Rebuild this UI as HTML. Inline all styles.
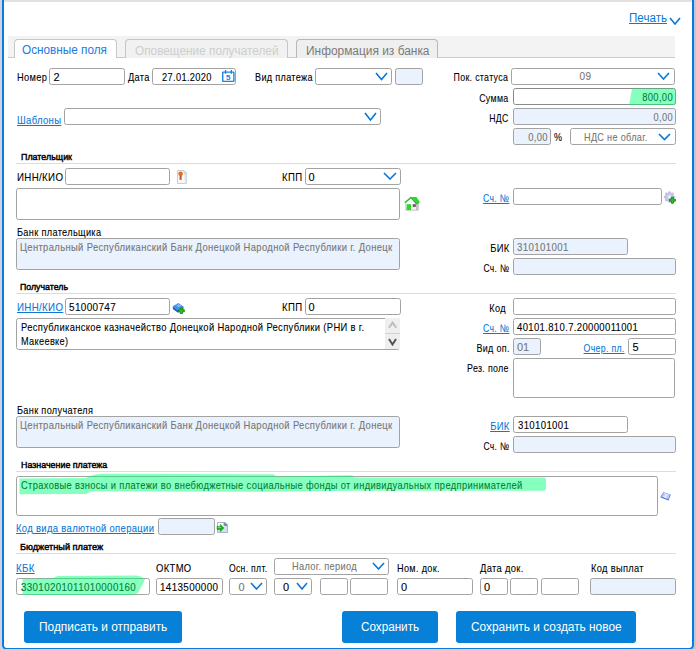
<!DOCTYPE html>
<html><head><meta charset="utf-8"><style>
html,body{margin:0;padding:0;width:696px;height:649px;overflow:hidden;background:#fff;font-family:"Liberation Sans", sans-serif;}
</style></head><body>
<div style="position:absolute;left:0px;top:0px;width:348px;height:649px;background:#cdd3e0;"></div>
<div style="position:absolute;left:348px;top:0px;width:348px;height:649px;background:#bfc7db;"></div>
<div style="position:absolute;left:2px;top:-10px;width:692px;height:660px;box-sizing:border-box;border:2px solid #0a7bda;border-radius:0 0 5px 5px;background:#fff"></div>
<div style="position:absolute;left:4px;top:0px;width:688px;height:2px;background:#e1e1e1;"></div>
<div style="position:absolute;left:629.00px;top:8px;font-size:12.5px;line-height:20px;font-weight:400;color:#0a78d7;white-space:nowrap;text-decoration:underline;text-underline-offset:1px;transform:scaleX(0.9279);transform-origin:0px top;">Печать</div>
<svg style="position:absolute;left:669px;top:17px" width="12" height="8" viewBox="0 0 12 8"><polyline points="1,1 6.0,7 11,1" fill="none" stroke="#0a78d7" stroke-width="1.6"/></svg>
<div style="position:absolute;left:8px;top:36px;width:667px;height:21px;background:#f3f3f3;"></div>
<div style="position:absolute;left:8px;top:57px;width:667px;height:1px;background:#cbcbcb;"></div>
<div style="position:absolute;left:14px;top:39px;width:103px;height:19px;box-sizing:border-box;border:1px solid #c8c8c8;border-bottom:none;border-radius:4px 4px 0 0;background:#fff"></div>
<div style="position:absolute;left:125px;top:39px;width:163px;height:19px;box-sizing:border-box;border:1px solid #c6c6c6;border-bottom:none;border-radius:4px 4px 0 0;background:#f1f1f1"></div>
<div style="position:absolute;left:296px;top:39px;width:142px;height:19px;box-sizing:border-box;border:1px solid #b8b8b8;border-bottom:none;border-radius:4px 4px 0 0;background:#efefef"></div>
<div style="position:absolute;left:22.40px;top:40px;font-size:12.5px;line-height:20px;font-weight:400;color:#2279dc;white-space:nowrap;transform:scaleX(0.9413);transform-origin:0px top;">Основные поля</div>
<div style="position:absolute;left:134.70px;top:41px;font-size:12.5px;line-height:20px;font-weight:400;color:#cecece;white-space:nowrap;transform:scaleX(0.9451);transform-origin:0px top;">Оповещение получателей</div>
<div style="position:absolute;left:305.50px;top:41px;font-size:12.5px;line-height:20px;font-weight:400;color:#7a7a7a;white-space:nowrap;transform:scaleX(0.9527);transform-origin:0px top;">Информация из банка</div>
<div style="position:absolute;left:16.50px;top:67px;font-size:11px;line-height:20px;font-weight:400;color:#000;white-space:nowrap;letter-spacing:0.4px;-webkit-text-stroke:0.1px #000;transform:scaleX(0.8460);transform-origin:0px top;">Номер</div>
<div style="position:absolute;left:49px;top:68px;width:76px;height:17px;box-sizing:border-box;border:1px solid #a3a3a3;background:#fff;border-radius:2.5px;"></div>
<div style="position:absolute;left:53.50px;top:67px;font-size:11px;line-height:20px;font-weight:400;color:#000;white-space:nowrap;-webkit-text-stroke:0.1px #000;">2</div>
<div style="position:absolute;left:128.00px;top:67px;font-size:11px;line-height:20px;font-weight:400;color:#000;white-space:nowrap;letter-spacing:0.4px;-webkit-text-stroke:0.1px #000;transform:scaleX(0.8370);transform-origin:0px top;">Дата</div>
<div style="position:absolute;left:152px;top:68px;width:84px;height:17px;box-sizing:border-box;border:1px solid #a3a3a3;background:#fff;border-radius:2.5px;"></div>
<div style="position:absolute;left:161.50px;top:67px;font-size:11px;line-height:20px;font-weight:400;color:#000;white-space:nowrap;letter-spacing:0.4px;-webkit-text-stroke:0.1px #000;transform:scaleX(0.8438);transform-origin:0px top;">27.01.2020</div>
<svg style="position:absolute;left:222px;top:70px" width="13" height="13" viewBox="0 0 13 13"><rect x="0.7" y="2.1" width="11.2" height="9.3" rx="0.6" fill="#fff" stroke="#1a82e0" stroke-width="1.4"/><rect x="2.9" y="0" width="1.3" height="3.8" fill="#1a82e0"/><rect x="8.7" y="0" width="1.3" height="3.8" fill="#1a82e0"/><text x="6.3" y="10" font-size="8" font-weight="700" text-anchor="middle" fill="#1a82e0" font-family="Liberation Sans">5</text></svg>
<div style="position:absolute;left:254.50px;top:67px;font-size:11px;line-height:20px;font-weight:400;color:#000;white-space:nowrap;letter-spacing:0.4px;-webkit-text-stroke:0.1px #000;transform:scaleX(0.8261);transform-origin:0px top;">Вид платежа</div>
<div style="position:absolute;left:315px;top:68px;width:77px;height:17px;box-sizing:border-box;border:1px solid #a3a3a3;background:#fff;border-radius:2.5px;"></div>
<svg style="position:absolute;left:375px;top:72px" width="13" height="8.5" viewBox="0 0 13 8.5"><polyline points="1,1 6.5,7.5 12,1" fill="none" stroke="#0a78d7" stroke-width="1.6"/></svg>
<div style="position:absolute;left:395px;top:68px;width:28px;height:17px;box-sizing:border-box;border:1px solid #a3a3a3;background:#eaf2fd;border-radius:2.5px;"></div>
<div style="position:absolute;left:440.20px;top:67px;font-size:11px;line-height:20px;font-weight:400;color:#000;white-space:nowrap;letter-spacing:0.4px;-webkit-text-stroke:0.1px #000;transform:scaleX(0.7994);transform-origin:67.80px top;">Пок. статуса</div>
<div style="position:absolute;left:511px;top:68px;width:164px;height:17px;box-sizing:border-box;border:1px solid #a3a3a3;background:#fff;border-radius:2.5px;"></div>
<div style="position:absolute;left:579.28px;top:66px;font-size:11px;line-height:20px;font-weight:400;color:#767676;white-space:nowrap;letter-spacing:0.4px;-webkit-text-stroke:0.1px #767676;transform:scaleX(0.9093);transform-origin:6.32px top;">09</div>
<svg style="position:absolute;left:657px;top:72px" width="13" height="8" viewBox="0 0 13 8"><polyline points="1,1 6.5,7 12,1" fill="none" stroke="#0a78d7" stroke-width="1.6"/></svg>
<div style="position:absolute;left:472.42px;top:88px;font-size:11px;line-height:20px;font-weight:400;color:#000;white-space:nowrap;letter-spacing:0.4px;-webkit-text-stroke:0.1px #000;transform:scaleX(0.8016);transform-origin:36.18px top;">Сумма</div>
<div style="position:absolute;left:513px;top:88px;width:163px;height:17px;box-sizing:border-box;border:1px solid #8a8a8a;background:#fff;border-radius:2.5px;"></div>
<div style="position:absolute;left:636.85px;top:87px;font-size:11px;line-height:20px;font-weight:400;color:#000;white-space:nowrap;letter-spacing:0.4px;-webkit-text-stroke:0.1px #000;transform:scaleX(0.8556);transform-origin:35.65px top;">800,00</div>
<div style="position:absolute;left:484.45px;top:108px;font-size:11px;line-height:20px;font-weight:400;color:#000;white-space:nowrap;letter-spacing:0.4px;-webkit-text-stroke:0.1px #000;transform:scaleX(0.7869);transform-origin:24.15px top;">НДС</div>
<div style="position:absolute;left:513px;top:108px;width:163px;height:17px;box-sizing:border-box;border:1px solid #a3a3a3;background:#eaf2fd;border-radius:2.5px;"></div>
<div style="position:absolute;left:649.88px;top:107px;font-size:11px;line-height:20px;font-weight:400;color:#767676;white-space:nowrap;letter-spacing:0.4px;-webkit-text-stroke:0.1px #767676;transform:scaleX(0.8401);transform-origin:22.62px top;">0,00</div>
<div style="position:absolute;left:513px;top:128px;width:38px;height:17px;box-sizing:border-box;border:1px solid #a3a3a3;background:#eaf2fd;border-radius:2.5px;"></div>
<div style="position:absolute;left:524.88px;top:127px;font-size:11px;line-height:20px;font-weight:400;color:#767676;white-space:nowrap;letter-spacing:0.4px;-webkit-text-stroke:0.1px #767676;transform:scaleX(0.8578);transform-origin:22.62px top;">0,00</div>
<div style="position:absolute;left:553.50px;top:127px;font-size:11px;line-height:20px;font-weight:400;color:#000;white-space:nowrap;letter-spacing:0.4px;-webkit-text-stroke:0.1px #000;transform:scaleX(0.8174);transform-origin:0px top;">%</div>
<div style="position:absolute;left:570px;top:128px;width:106px;height:17px;box-sizing:border-box;border:1px solid #a3a3a3;background:#fff;border-radius:2.5px;"></div>
<div style="position:absolute;left:583.70px;top:127px;font-size:11px;line-height:20px;font-weight:400;color:#767676;white-space:nowrap;letter-spacing:0.4px;-webkit-text-stroke:0.1px #767676;transform:scaleX(0.8247);transform-origin:0px top;">НДС не облаг.</div>
<svg style="position:absolute;left:658px;top:133px" width="13" height="7.5" viewBox="0 0 13 7.5"><polyline points="1,1 6.5,6.5 12,1" fill="none" stroke="#0a78d7" stroke-width="1.6"/></svg>
<div style="position:absolute;left:17.00px;top:110px;font-size:11px;line-height:20px;font-weight:400;color:#0a78d7;white-space:nowrap;letter-spacing:0.4px;-webkit-text-stroke:0.1px #0a78d7;text-decoration:underline;text-underline-offset:1px;transform:scaleX(0.8618);transform-origin:0px top;">Шаблоны</div>
<div style="position:absolute;left:64px;top:108px;width:317px;height:17px;box-sizing:border-box;border:1px solid #a3a3a3;background:#fff;border-radius:2.5px;"></div>
<svg style="position:absolute;left:364px;top:112px" width="13" height="9" viewBox="0 0 13 9"><polyline points="1,1 6.5,8 12,1" fill="none" stroke="#0a78d7" stroke-width="1.6"/></svg>
<div style="position:absolute;left:20.50px;top:147px;font-size:9.5px;line-height:20px;font-weight:400;color:#000;white-space:nowrap;transform:scaleX(0.9369);transform-origin:0px top;-webkit-text-stroke:0.45px #000;">Плательщик</div>
<div style="position:absolute;left:16px;top:163px;width:660px;height:1px;background:#dcdcdc;"></div>
<div style="position:absolute;left:16.50px;top:167px;font-size:11px;line-height:20px;font-weight:400;color:#000;white-space:nowrap;letter-spacing:0.4px;-webkit-text-stroke:0.1px #000;transform:scaleX(0.8824);transform-origin:0px top;">ИНН/КИО</div>
<div style="position:absolute;left:65px;top:168px;width:105px;height:17px;box-sizing:border-box;border:1px solid #a3a3a3;background:#fff;border-radius:2.5px;"></div>
<svg style="position:absolute;left:176px;top:170px" width="12" height="14" viewBox="0 0 12 14"><path d="M1.5 0.5h6.5l2.5 2.5v10.5h-9z" fill="#f6fafc" stroke="#c4d0d4"/><path d="M8 3h2.5v10.5h-1.5z" fill="#dde6ea"/><path d="M8 0.5v2.5h2.5" fill="none" stroke="#b8c4c8" stroke-width="0.8"/><path d="M3.6 5h2v5.2l-1-0.7-1 0.7z" fill="#d04a08"/><circle cx="4.6" cy="3.8" r="2.3" fill="#ea6a1c"/></svg>
<div style="position:absolute;left:279.28px;top:167px;font-size:11px;line-height:20px;font-weight:400;color:#000;white-space:nowrap;letter-spacing:0.4px;-webkit-text-stroke:0.1px #000;transform:scaleX(0.8687);transform-origin:23.02px top;">КПП</div>
<div style="position:absolute;left:305px;top:168px;width:96px;height:17px;box-sizing:border-box;border:1px solid #a3a3a3;background:#fff;border-radius:2.5px;"></div>
<div style="position:absolute;left:308.50px;top:167px;font-size:11px;line-height:20px;font-weight:400;color:#000;white-space:nowrap;-webkit-text-stroke:0.1px #000;">0</div>
<svg style="position:absolute;left:383px;top:172px" width="14" height="8" viewBox="0 0 14 8"><polyline points="1,1 7.0,7 13,1" fill="none" stroke="#0a78d7" stroke-width="1.6"/></svg>
<div style="position:absolute;left:16px;top:188px;width:384px;height:32px;box-sizing:border-box;border:1px solid #a3a3a3;background:#fff;border-radius:2.5px;"></div>
<svg style="position:absolute;left:404px;top:196px" width="17" height="15" viewBox="0 0 17 15"><path d="M1.3 7.2L7.2 6.4L13.8 7L14.8 13.8L2 14.3z" fill="#faf6fa"/><path d="M11.5 7.5L14.8 6.5L14.8 13.6L12 14.3z" fill="#c8c0c8"/><path d="M1.6 14.2h13" stroke="#b8b0b8" stroke-width="0.8"/><path d="M1.6 7.2v7" stroke="#d0c8d0" stroke-width="0.8"/><path d="M0.8 6.8L7.3 1.2" stroke="#22bb22" stroke-width="1.4"/><path d="M7.2 1L12.4 1L16 6.2L13.8 7.9z" fill="#22dd22"/><path d="M7.2 1L13.8 7.9L12.2 8.2L6.6 2z" fill="#1aaa1a"/><rect x="2.6" y="8.2" width="4.4" height="5.8" fill="#22dd22"/><rect x="8.8" y="8.2" width="3" height="2.7" fill="#5a5a5a"/></svg>
<div style="position:absolute;left:475.93px;top:188px;font-size:11px;line-height:20px;font-weight:400;color:#0a78d7;white-space:nowrap;letter-spacing:0.4px;-webkit-text-stroke:0.1px #0a78d7;text-decoration:underline;text-underline-offset:1px;transform:scaleX(0.7862);transform-origin:33.07px top;">Сч. №</div>
<div style="position:absolute;left:513px;top:188px;width:149px;height:17px;box-sizing:border-box;border:1px solid #a3a3a3;background:#fff;border-radius:2.5px;"></div>
<svg style="position:absolute;left:663px;top:191px" width="13" height="13" viewBox="0 0 13 13"><rect x="5.4" y="0.3" width="2.2" height="2.6" fill="#c4c4e6" transform="rotate(0 6.5 6)"/><rect x="5.4" y="0.3" width="2.2" height="2.6" fill="#c4c4e6" transform="rotate(45 6.5 6)"/><rect x="5.4" y="0.3" width="2.2" height="2.6" fill="#c4c4e6" transform="rotate(90 6.5 6)"/><rect x="5.4" y="0.3" width="2.2" height="2.6" fill="#c4c4e6" transform="rotate(135 6.5 6)"/><rect x="5.4" y="0.3" width="2.2" height="2.6" fill="#c4c4e6" transform="rotate(180 6.5 6)"/><rect x="5.4" y="0.3" width="2.2" height="2.6" fill="#c4c4e6" transform="rotate(225 6.5 6)"/><rect x="5.4" y="0.3" width="2.2" height="2.6" fill="#c4c4e6" transform="rotate(270 6.5 6)"/><rect x="5.4" y="0.3" width="2.2" height="2.6" fill="#c4c4e6" transform="rotate(315 6.5 6)"/><circle cx="6.5" cy="6" r="4.3" fill="#c8c8ea" stroke="#b0b0dc" stroke-width="0.6"/><circle cx="6.5" cy="6" r="1.4" fill="#f4f4ff"/><path d="M8.4 6.2h2v2h2v2h-2v2h-2v-2h-2v-2h2z" fill="#30c030" stroke="#0d860d" stroke-width="0.9"/></svg>
<div style="position:absolute;left:16.70px;top:222px;font-size:11px;line-height:20px;font-weight:400;color:#000;white-space:nowrap;letter-spacing:0.4px;-webkit-text-stroke:0.1px #000;transform:scaleX(0.8340);transform-origin:0px top;">Банк плательщика</div>
<div style="position:absolute;left:16px;top:238px;width:384px;height:32px;box-sizing:border-box;border:1px solid #a3a3a3;background:#eaf2fd;border-radius:2.5px;"></div>
<div style="position:absolute;left:19.70px;top:237px;font-size:11px;line-height:20px;font-weight:400;color:#767676;white-space:nowrap;letter-spacing:0.4px;-webkit-text-stroke:0.1px #767676;transform:scaleX(0.8575);transform-origin:0px top;">Центральный Республиканский Банк Донецкой Народной Республики г. Донецк</div>
<div style="position:absolute;left:487.07px;top:238px;font-size:11px;line-height:20px;font-weight:400;color:#000;white-space:nowrap;letter-spacing:0.4px;-webkit-text-stroke:0.1px #000;transform:scaleX(0.8552);transform-origin:22.33px top;">БИК</div>
<div style="position:absolute;left:513px;top:238px;width:115px;height:17px;box-sizing:border-box;border:1px solid #a3a3a3;background:#eaf2fd;border-radius:2.5px;"></div>
<div style="position:absolute;left:517.20px;top:237px;font-size:11px;line-height:20px;font-weight:400;color:#767676;white-space:nowrap;letter-spacing:0.4px;-webkit-text-stroke:0.1px #767676;transform:scaleX(0.8804);transform-origin:0px top;">310101001</div>
<div style="position:absolute;left:475.93px;top:258px;font-size:11px;line-height:20px;font-weight:400;color:#000;white-space:nowrap;letter-spacing:0.4px;-webkit-text-stroke:0.1px #000;transform:scaleX(0.7741);transform-origin:33.07px top;">Сч. №</div>
<div style="position:absolute;left:513px;top:258px;width:163px;height:17px;box-sizing:border-box;border:1px solid #a3a3a3;background:#eaf2fd;border-radius:2.5px;"></div>
<div style="position:absolute;left:20.30px;top:277px;font-size:9.5px;line-height:20px;font-weight:400;color:#000;white-space:nowrap;transform:scaleX(0.9242);transform-origin:0px top;-webkit-text-stroke:0.45px #000;">Получатель</div>
<div style="position:absolute;left:16px;top:293px;width:660px;height:1px;background:#dcdcdc;"></div>
<div style="position:absolute;left:16.50px;top:297px;font-size:11px;line-height:20px;font-weight:400;color:#0a78d7;white-space:nowrap;letter-spacing:0.4px;-webkit-text-stroke:0.1px #0a78d7;text-decoration:underline;text-underline-offset:1px;transform:scaleX(0.8824);transform-origin:0px top;">ИНН/КИО</div>
<div style="position:absolute;left:65px;top:298px;width:105px;height:17px;box-sizing:border-box;border:1px solid #a3a3a3;background:#fff;border-radius:2.5px;"></div>
<div style="position:absolute;left:69.00px;top:297px;font-size:11px;line-height:20px;font-weight:400;color:#000;white-space:nowrap;letter-spacing:0.4px;-webkit-text-stroke:0.1px #000;transform:scaleX(0.9042);transform-origin:0px top;">51000747</div>
<svg style="position:absolute;left:172px;top:302px" width="13" height="12" viewBox="0 0 13 12"><path d="M0.8 4.2L6.2 1L11.5 4.6L6 8.2z" fill="#3f92ee"/><path d="M4.5 3.2L7.5 5M6 2.5L9 4.3" stroke="#cfe4ff" stroke-width="0.7"/><path d="M0.8 4.2L6 8.2L6 10.8L0.8 7z" fill="#1d5fc4"/><path d="M6 8.2L11.5 4.6L11.5 7.2L6 10.8z" fill="#2a74d6"/><path d="M8.3 5.8h2v2h2v2h-2v2h-2v-2h-2v-2h2z" fill="#30c030" stroke="#0d860d" stroke-width="0.9"/></svg>
<div style="position:absolute;left:279.28px;top:297px;font-size:11px;line-height:20px;font-weight:400;color:#000;white-space:nowrap;letter-spacing:0.4px;-webkit-text-stroke:0.1px #000;transform:scaleX(0.8687);transform-origin:23.02px top;">КПП</div>
<div style="position:absolute;left:305px;top:298px;width:96px;height:17px;box-sizing:border-box;border:1px solid #a3a3a3;background:#fff;border-radius:2.5px;"></div>
<div style="position:absolute;left:308.50px;top:297px;font-size:11px;line-height:20px;font-weight:400;color:#000;white-space:nowrap;-webkit-text-stroke:0.1px #000;">0</div>
<div style="position:absolute;left:16px;top:318px;width:384px;height:32px;box-sizing:border-box;border:1px solid #a3a3a3;background:#fff;border-radius:2.5px;"></div>
<div style="position:absolute;left:385px;top:318px;width:15px;height:31px;background:#efefef;"></div>
<div style="position:absolute;left:385px;top:333px;width:15px;height:1px;background:#d2d2d2;"></div>
<svg style="position:absolute;left:388px;top:321px" width="10" height="8" viewBox="0 0 10 8"><polyline points="1,6.8 4.6,1.6 8.2,6.8" fill="none" stroke="#bdbdbd" stroke-width="2"/></svg>
<svg style="position:absolute;left:388px;top:338px" width="9" height="7.5" viewBox="0 0 9 7.5"><polyline points="1,1 4.5,6.5 8,1" fill="none" stroke="#555" stroke-width="2"/></svg>
<div style="position:absolute;left:20.70px;top:317px;font-size:11px;line-height:20px;font-weight:400;color:#000;white-space:nowrap;letter-spacing:0.4px;-webkit-text-stroke:0.1px #000;transform:scaleX(0.8521);transform-origin:0px top;">Республиканское казначейство Донецкой Народной Республики (РНИ в г.</div>
<div style="position:absolute;left:20.70px;top:331px;font-size:11px;line-height:20px;font-weight:400;color:#000;white-space:nowrap;letter-spacing:0.4px;-webkit-text-stroke:0.1px #000;transform:scaleX(0.8358);transform-origin:0px top;">Макеевке)</div>
<div style="position:absolute;left:486.49px;top:298px;font-size:11px;line-height:20px;font-weight:400;color:#000;white-space:nowrap;letter-spacing:0.4px;-webkit-text-stroke:0.1px #000;transform:scaleX(0.8356);transform-origin:19.51px top;">Код</div>
<div style="position:absolute;left:513px;top:298px;width:163px;height:17px;box-sizing:border-box;border:1px solid #a3a3a3;background:#fff;border-radius:2.5px;"></div>
<div style="position:absolute;left:475.93px;top:318px;font-size:11px;line-height:20px;font-weight:400;color:#0a78d7;white-space:nowrap;letter-spacing:0.4px;-webkit-text-stroke:0.1px #0a78d7;text-decoration:underline;text-underline-offset:1px;transform:scaleX(0.7862);transform-origin:33.07px top;">Сч. №</div>
<div style="position:absolute;left:513px;top:318px;width:163px;height:17px;box-sizing:border-box;border:1px solid #a3a3a3;background:#fff;border-radius:2.5px;"></div>
<div style="position:absolute;left:517.20px;top:317px;font-size:11px;line-height:20px;font-weight:400;color:#000;white-space:nowrap;letter-spacing:0.4px;-webkit-text-stroke:0.1px #000;transform:scaleX(0.8659);transform-origin:0px top;">40101.810.7.20000011001</div>
<div style="position:absolute;left:468.51px;top:338px;font-size:11px;line-height:20px;font-weight:400;color:#000;white-space:nowrap;letter-spacing:0.4px;-webkit-text-stroke:0.1px #000;transform:scaleX(0.8175);transform-origin:40.49px top;">Вид оп.</div>
<div style="position:absolute;left:513px;top:338px;width:28px;height:17px;box-sizing:border-box;border:1px solid #a3a3a3;background:#eaf2fd;border-radius:2.5px;"></div>
<div style="position:absolute;left:517.00px;top:337px;font-size:11px;line-height:20px;font-weight:400;color:#767676;white-space:nowrap;-webkit-text-stroke:0.1px #767676;">01</div>
<div style="position:absolute;left:572.73px;top:338px;font-size:11px;line-height:20px;font-weight:400;color:#0a78d7;white-space:nowrap;letter-spacing:0.4px;-webkit-text-stroke:0.1px #0a78d7;text-decoration:underline;text-underline-offset:1px;transform:scaleX(0.7938);transform-origin:51.27px top;">Очер. пл.</div>
<div style="position:absolute;left:628px;top:338px;width:48px;height:17px;box-sizing:border-box;border:1px solid #a3a3a3;background:#fff;border-radius:2.5px;"></div>
<div style="position:absolute;left:632.50px;top:337px;font-size:11px;line-height:20px;font-weight:400;color:#000;white-space:nowrap;-webkit-text-stroke:0.1px #000;">5</div>
<div style="position:absolute;left:456.64px;top:358px;font-size:11px;line-height:20px;font-weight:400;color:#000;white-space:nowrap;letter-spacing:0.4px;-webkit-text-stroke:0.1px #000;transform:scaleX(0.8045);transform-origin:51.46px top;">Рез. поле</div>
<div style="position:absolute;left:513px;top:358px;width:162px;height:40px;box-sizing:border-box;border:1px solid #a3a3a3;background:#fff;border-radius:2.5px;"></div>
<div style="position:absolute;left:16.90px;top:400px;font-size:11px;line-height:20px;font-weight:400;color:#000;white-space:nowrap;letter-spacing:0.4px;-webkit-text-stroke:0.1px #000;transform:scaleX(0.8314);transform-origin:0px top;">Банк получателя</div>
<div style="position:absolute;left:16px;top:416px;width:384px;height:32px;box-sizing:border-box;border:1px solid #a3a3a3;background:#eaf2fd;border-radius:2.5px;"></div>
<div style="position:absolute;left:19.70px;top:415px;font-size:11px;line-height:20px;font-weight:400;color:#767676;white-space:nowrap;letter-spacing:0.4px;-webkit-text-stroke:0.1px #767676;transform:scaleX(0.8575);transform-origin:0px top;">Центральный Республиканский Банк Донецкой Народной Республики г. Донецк</div>
<div style="position:absolute;left:487.17px;top:416px;font-size:11px;line-height:20px;font-weight:400;color:#0a78d7;white-space:nowrap;letter-spacing:0.4px;-webkit-text-stroke:0.1px #0a78d7;text-decoration:underline;text-underline-offset:1px;transform:scaleX(0.8597);transform-origin:22.33px top;">БИК</div>
<div style="position:absolute;left:513px;top:416px;width:115px;height:17px;box-sizing:border-box;border:1px solid #a3a3a3;background:#fff;border-radius:2.5px;"></div>
<div style="position:absolute;left:517.60px;top:415px;font-size:11px;line-height:20px;font-weight:400;color:#000;white-space:nowrap;letter-spacing:0.4px;-webkit-text-stroke:0.1px #000;transform:scaleX(0.8718);transform-origin:0px top;">310101001</div>
<div style="position:absolute;left:475.93px;top:436px;font-size:11px;line-height:20px;font-weight:400;color:#000;white-space:nowrap;letter-spacing:0.4px;-webkit-text-stroke:0.1px #000;transform:scaleX(0.7741);transform-origin:33.07px top;">Сч. №</div>
<div style="position:absolute;left:513px;top:436px;width:163px;height:17px;box-sizing:border-box;border:1px solid #a3a3a3;background:#eaf2fd;border-radius:2.5px;"></div>
<div style="position:absolute;left:20.70px;top:455px;font-size:9.5px;line-height:20px;font-weight:400;color:#000;white-space:nowrap;transform:scaleX(0.9344);transform-origin:0px top;-webkit-text-stroke:0.45px #000;">Назначение платежа</div>
<div style="position:absolute;left:16px;top:471px;width:660px;height:1px;background:#dcdcdc;"></div>
<div style="position:absolute;left:16px;top:476px;width:642px;height:40px;box-sizing:border-box;border:1px solid #a3a3a3;background:#fff;border-radius:2.5px;"></div>
<div style="position:absolute;left:20.60px;top:475px;font-size:11px;line-height:20px;font-weight:400;color:#000;white-space:nowrap;letter-spacing:0.4px;-webkit-text-stroke:0.1px #000;transform:scaleX(0.8480);transform-origin:0px top;">Страховые взносы и платежи во внебюджетные социальные фонды от индивидуальных предпринимателей</div>
<svg style="position:absolute;left:659px;top:491px" width="13" height="11" viewBox="0 0 13 11"><path d="M4.4 1.3L11.8 3.4L9.5 9.6L1.2 6.3z" fill="#2b78e0"/><path d="M4.8 1.8L11 3.6L9.2 8.2L2.2 5.6z" fill="#d6d6fa"/><path d="M7.9 2.7L5.8 7" stroke="#f4f4ff" stroke-width="0.9"/><path d="M5.2 3L3.8 5.2M9.6 4L8.6 6.6" stroke="#9a9ae0" stroke-width="0.6"/></svg>
<div style="position:absolute;left:15.70px;top:518px;font-size:11px;line-height:20px;font-weight:400;color:#0a78d7;white-space:nowrap;letter-spacing:0.4px;-webkit-text-stroke:0.1px #0a78d7;text-decoration:underline;text-underline-offset:1px;transform:scaleX(0.8562);transform-origin:0px top;">Код вида валютной операции</div>
<div style="position:absolute;left:158px;top:518px;width:57px;height:17px;box-sizing:border-box;border:1px solid #a3a3a3;background:#eaf2fd;border-radius:2.5px;"></div>
<svg style="position:absolute;left:216px;top:521px" width="12" height="13" viewBox="0 0 12 13"><path d="M1.5 1.5h7.5l2.5 2.5v7.5h-10z" fill="#d6deea" stroke="#a8b4c8"/><rect x="2" y="2" width="6.5" height="4" fill="#fbfcfe"/><path d="M7.6 1.5h1.6l2.3 2.3v1.2h-3.9z" fill="#7f8fb0"/><path d="M1 5.5h3.3v-2.2l3.6 3.7l-3.6 3.7v-2.2h-3.3z" fill="#18b418" stroke="#0a900a" stroke-width="0.5"/><path d="M1.8 6.5h3" stroke="#8ef08e" stroke-width="0.8"/></svg>
<div style="position:absolute;left:20.30px;top:537px;font-size:9.5px;line-height:20px;font-weight:400;color:#000;white-space:nowrap;transform:scaleX(0.9670);transform-origin:0px top;-webkit-text-stroke:0.45px #000;">Бюджетный платеж</div>
<div style="position:absolute;left:16px;top:553px;width:660px;height:1px;background:#dcdcdc;"></div>
<div style="position:absolute;left:15.80px;top:558px;font-size:11px;line-height:20px;font-weight:400;color:#0a78d7;white-space:nowrap;letter-spacing:0.4px;-webkit-text-stroke:0.1px #0a78d7;text-decoration:underline;text-underline-offset:1px;transform:scaleX(0.8832);transform-origin:0px top;">КБК</div>
<div style="position:absolute;left:16px;top:578px;width:134px;height:17px;box-sizing:border-box;border:1px solid #a3a3a3;background:#fff;border-radius:2.5px;"></div>
<div style="position:absolute;left:21.00px;top:577px;font-size:11px;line-height:20px;font-weight:400;color:#000;white-space:nowrap;letter-spacing:0.4px;-webkit-text-stroke:0.1px #000;transform:scaleX(0.8881);transform-origin:0px top;">33010201011010000160</div>
<div style="position:absolute;left:156.30px;top:558px;font-size:11px;line-height:20px;font-weight:400;color:#000;white-space:nowrap;letter-spacing:0.4px;-webkit-text-stroke:0.1px #000;transform:scaleX(0.8584);transform-origin:0px top;">ОКТМО</div>
<div style="position:absolute;left:156px;top:578px;width:67px;height:17px;box-sizing:border-box;border:1px solid #a3a3a3;background:#fff;border-radius:2.5px;"></div>
<div style="position:absolute;left:159.80px;top:577px;font-size:11px;line-height:20px;font-weight:400;color:#000;white-space:nowrap;letter-spacing:0.4px;-webkit-text-stroke:0.1px #000;transform:scaleX(0.8952);transform-origin:0px top;">1413500000</div>
<div style="position:absolute;left:229.30px;top:558px;font-size:11px;line-height:20px;font-weight:400;color:#000;white-space:nowrap;letter-spacing:0.4px;-webkit-text-stroke:0.1px #000;transform:scaleX(0.7824);transform-origin:0px top;">Осн. плт.</div>
<div style="position:absolute;left:229px;top:578px;width:38px;height:17px;box-sizing:border-box;border:1px solid #a3a3a3;background:#fff;border-radius:2.5px;"></div>
<div style="position:absolute;left:238.50px;top:577px;font-size:11px;line-height:20px;font-weight:400;color:#767676;white-space:nowrap;-webkit-text-stroke:0.1px #767676;">0</div>
<svg style="position:absolute;left:250px;top:582px" width="13" height="8" viewBox="0 0 13 8"><polyline points="1,1 6.5,7 12,1" fill="none" stroke="#0a78d7" stroke-width="1.6"/></svg>
<div style="position:absolute;left:274px;top:558px;width:115px;height:17px;box-sizing:border-box;border:1px solid #a3a3a3;background:#fff;border-radius:2.5px;"></div>
<div style="position:absolute;left:292.40px;top:556px;font-size:11px;line-height:20px;font-weight:400;color:#767676;white-space:nowrap;letter-spacing:0.4px;-webkit-text-stroke:0.1px #767676;transform:scaleX(0.8409);transform-origin:0px top;">Налог. период</div>
<svg style="position:absolute;left:372px;top:562px" width="13" height="8" viewBox="0 0 13 8"><polyline points="1,1 6.5,7 12,1" fill="none" stroke="#0a78d7" stroke-width="1.6"/></svg>
<div style="position:absolute;left:274px;top:578px;width:38px;height:17px;box-sizing:border-box;border:1px solid #a3a3a3;background:#fff;border-radius:2.5px;"></div>
<div style="position:absolute;left:283.00px;top:577px;font-size:11px;line-height:20px;font-weight:400;color:#000;white-space:nowrap;-webkit-text-stroke:0.1px #000;">0</div>
<svg style="position:absolute;left:296px;top:582px" width="12" height="8" viewBox="0 0 12 8"><polyline points="1,1 6.0,7 11,1" fill="none" stroke="#0a78d7" stroke-width="1.6"/></svg>
<div style="position:absolute;left:320px;top:578px;width:28px;height:17px;box-sizing:border-box;border:1px solid #a3a3a3;background:#fff;border-radius:2.5px;"></div>
<div style="position:absolute;left:350px;top:578px;width:38px;height:17px;box-sizing:border-box;border:1px solid #a3a3a3;background:#fff;border-radius:2.5px;"></div>
<div style="position:absolute;left:396.90px;top:558px;font-size:11px;line-height:20px;font-weight:400;color:#000;white-space:nowrap;letter-spacing:0.4px;-webkit-text-stroke:0.1px #000;transform:scaleX(0.8296);transform-origin:0px top;">Ном. док.</div>
<div style="position:absolute;left:397px;top:578px;width:76px;height:17px;box-sizing:border-box;border:1px solid #a3a3a3;background:#fff;border-radius:2.5px;"></div>
<div style="position:absolute;left:401.00px;top:577px;font-size:11px;line-height:20px;font-weight:400;color:#000;white-space:nowrap;-webkit-text-stroke:0.1px #000;">0</div>
<div style="position:absolute;left:480.20px;top:558px;font-size:11px;line-height:20px;font-weight:400;color:#000;white-space:nowrap;letter-spacing:0.4px;-webkit-text-stroke:0.1px #000;transform:scaleX(0.8506);transform-origin:0px top;">Дата док.</div>
<div style="position:absolute;left:480px;top:578px;width:28px;height:17px;box-sizing:border-box;border:1px solid #a3a3a3;background:#fff;border-radius:2.5px;"></div>
<div style="position:absolute;left:484.00px;top:577px;font-size:11px;line-height:20px;font-weight:400;color:#000;white-space:nowrap;-webkit-text-stroke:0.1px #000;">0</div>
<div style="position:absolute;left:510px;top:578px;width:28px;height:17px;box-sizing:border-box;border:1px solid #a3a3a3;background:#fff;border-radius:2.5px;"></div>
<div style="position:absolute;left:541px;top:578px;width:38px;height:17px;box-sizing:border-box;border:1px solid #a3a3a3;background:#fff;border-radius:2.5px;"></div>
<div style="position:absolute;left:590.70px;top:558px;font-size:11px;line-height:20px;font-weight:400;color:#000;white-space:nowrap;letter-spacing:0.4px;-webkit-text-stroke:0.1px #000;transform:scaleX(0.8428);transform-origin:0px top;">Код выплат</div>
<div style="position:absolute;left:590px;top:578px;width:86px;height:17px;box-sizing:border-box;border:1px solid #a3a3a3;background:#eaf2fd;border-radius:2.5px;"></div>
<div style="position:absolute;left:24px;top:611px;width:158px;height:32px;box-sizing:border-box;background:#0780d7;border-radius:3px;"></div>
<div style="position:absolute;left:39.20px;top:617px;font-size:12.5px;line-height:20px;font-weight:400;color:#fff;white-space:nowrap;transform:scaleX(0.9521);transform-origin:0px top;">Подписать и отправить</div>
<div style="position:absolute;left:342px;top:611px;width:96px;height:32px;box-sizing:border-box;background:#0780d7;border-radius:3px;"></div>
<div style="position:absolute;left:361.20px;top:617px;font-size:12.5px;line-height:20px;font-weight:400;color:#fff;white-space:nowrap;transform:scaleX(0.9352);transform-origin:0px top;">Сохранить</div>
<div style="position:absolute;left:456px;top:611px;width:180px;height:32px;box-sizing:border-box;background:#0780d7;border-radius:3px;"></div>
<div style="position:absolute;left:470.90px;top:617px;font-size:12.5px;line-height:20px;font-weight:400;color:#fff;white-space:nowrap;transform:scaleX(0.9492);transform-origin:0px top;">Сохранить и создать новое</div>
<svg style="position:absolute;left:0;top:0" width="696" height="649"><path d="M632 88.5 L673 88.5 Q676 88.5 676 91 L676 102.5 Q676 105 673 105 L629 105 Z" fill="rgba(0,255,116,0.47)"/><path d="M19.5 478.5 L86 478 Q92 474 104 473.8 L274 474.3 L276 476.5 L352 475.2 L354 477.6 L544 477.6 Q546 477.6 546 480 L546 489 Q546 490.7 544 490.7 L352 490.7 L262 491.7 L92 491.2 L86 493.9 L19.5 494.3 Z" fill="rgba(0,255,116,0.47)"/><path d="M22.6 579 L52 578.5 Q55 576.5 58 576 L136 575.5 Q142 576 145 579.5 L138 593 L132 595 L22.6 595 Z" fill="rgba(0,255,116,0.47)"/></svg>
</body></html>
